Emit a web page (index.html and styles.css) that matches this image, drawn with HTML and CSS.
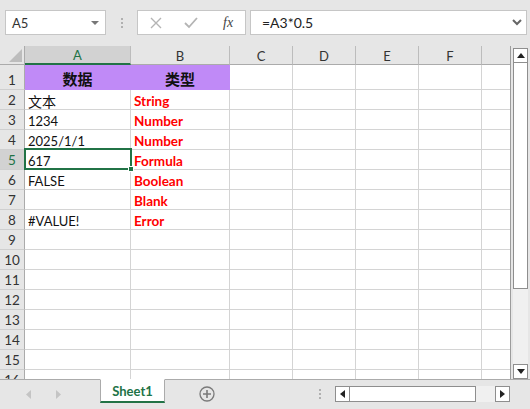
FILE: index.html
```html
<!DOCTYPE html>
<html>
<head>
<meta charset="utf-8">
<link rel="stylesheet" href="styles.css">
</head>
<body>
<div class="toolbar">
  <div class="namebox"><span>A5</span><span class="tri-down"></span></div>
  <div class="sep"><span class="dots"><i></i><i></i><i></i></span></div>
  <div class="btnbox">
    <div class="fbtn"><svg width="12" height="12" viewBox="0 0 12 12"><path d="M1 1 L11 11 M11 1 L1 11" stroke="#b4b4b4" stroke-width="1.4" fill="none"/></svg></div>
    <div class="fbtn"><svg width="14" height="12" viewBox="0 0 14 12"><path d="M1 6 L5 10 L13 1" stroke="#b4b4b4" stroke-width="1.8" fill="none"/></svg></div>
    <div class="fbtn fx">fx</div>
  </div>
  <div class="formula"><span>=A3*0.5</span><svg width="10" height="7" viewBox="0 0 10 7"><path d="M1 1 L5 5 L9 1" stroke="#666" stroke-width="2" fill="none"/></svg></div>
</div>
<div class="main">
  <div class="sheet">
    <div class="corner"><svg width="25" height="19" viewBox="0 0 25 19"><polygon points="22,3 22,16 9,16" fill="#bdbdbd"/></svg></div>
    <div class="ch ch-sel">A</div><div class="ch">B</div><div class="ch">C</div><div class="ch">D</div><div class="ch">E</div><div class="ch">F</div><div class="ch last"></div>

    <div class="rh">1</div><div class="c p ctr">数据</div><div class="c p ctr">类型</div><div class="c"></div><div class="c"></div><div class="c"></div><div class="c"></div><div class="c last"></div>
    <div class="rh">2</div><div class="c"><span class="cjk">文本</span></div><div class="c red">String</div><div class="c"></div><div class="c"></div><div class="c"></div><div class="c"></div><div class="c last"></div>
    <div class="rh">3</div><div class="c">1234</div><div class="c red">Number</div><div class="c"></div><div class="c"></div><div class="c"></div><div class="c"></div><div class="c last"></div>
    <div class="rh">4</div><div class="c">2025/1/1</div><div class="c red">Number</div><div class="c"></div><div class="c"></div><div class="c"></div><div class="c"></div><div class="c last"></div>
    <div class="rh rh-sel">5</div><div class="c sel">617<span class="selbox"><span class="handle"></span></span></div><div class="c red">Formula</div><div class="c"></div><div class="c"></div><div class="c"></div><div class="c"></div><div class="c last"></div>
    <div class="rh">6</div><div class="c">FALSE</div><div class="c red">Boolean</div><div class="c"></div><div class="c"></div><div class="c"></div><div class="c"></div><div class="c last"></div>
    <div class="rh">7</div><div class="c"></div><div class="c red">Blank</div><div class="c"></div><div class="c"></div><div class="c"></div><div class="c"></div><div class="c last"></div>
    <div class="rh">8</div><div class="c">#VALUE!</div><div class="c red">Error</div><div class="c"></div><div class="c"></div><div class="c"></div><div class="c"></div><div class="c last"></div>
    <div class="rh">9</div><div class="c"></div><div class="c"></div><div class="c"></div><div class="c"></div><div class="c"></div><div class="c"></div><div class="c last"></div>
    <div class="rh">10</div><div class="c"></div><div class="c"></div><div class="c"></div><div class="c"></div><div class="c"></div><div class="c"></div><div class="c last"></div>
    <div class="rh">11</div><div class="c"></div><div class="c"></div><div class="c"></div><div class="c"></div><div class="c"></div><div class="c"></div><div class="c last"></div>
    <div class="rh">12</div><div class="c"></div><div class="c"></div><div class="c"></div><div class="c"></div><div class="c"></div><div class="c"></div><div class="c last"></div>
    <div class="rh">13</div><div class="c"></div><div class="c"></div><div class="c"></div><div class="c"></div><div class="c"></div><div class="c"></div><div class="c last"></div>
    <div class="rh">14</div><div class="c"></div><div class="c"></div><div class="c"></div><div class="c"></div><div class="c"></div><div class="c"></div><div class="c last"></div>
    <div class="rh">15</div><div class="c"></div><div class="c"></div><div class="c"></div><div class="c"></div><div class="c"></div><div class="c"></div><div class="c last"></div>
    <div class="rh">16</div><div class="c"></div><div class="c"></div><div class="c"></div><div class="c"></div><div class="c"></div><div class="c"></div><div class="c last"></div>
  </div>
  <div class="vscroll">
    <div class="sbtn"><svg width="8" height="5" viewBox="0 0 8 5"><polygon points="0,5 8,5 4,0" fill="#222"/></svg></div>
    <div class="vthumb"></div>
    <div class="vtrack"></div>
    <div class="sbtn"><svg width="8" height="5" viewBox="0 0 8 5"><polygon points="0,0 8,0 4,5" fill="#222"/></svg></div>
  </div>
</div>
<div class="statusbar">
  <div class="nav">
    <svg width="6" height="9" viewBox="0 0 6 9"><polygon points="5,0 5,9 0,4.5" fill="#c4c4c4"/></svg>
    <svg width="6" height="9" viewBox="0 0 6 9"><polygon points="1,0 1,9 6,4.5" fill="#c4c4c4"/></svg>
  </div>
  <div class="tab">Sheet1</div>
  <div class="addsheet"><svg width="16" height="16" viewBox="0 0 16 16"><circle cx="8" cy="8" r="7" fill="none" stroke="#7a7a7a" stroke-width="1.3"/><path d="M8 4 V12 M4 8 H12" stroke="#7a7a7a" stroke-width="1.6"/></svg></div>
  <div class="hdots"><i></i><i></i><i></i></div>
  <div class="hscroll">
    <div class="hbtn"><svg width="5" height="8" viewBox="0 0 5 8"><polygon points="5,0 5,8 0,4" fill="#222"/></svg></div>
    <div class="hthumb"></div>
    <div class="htrack"></div>
    <div class="hbtn"><svg width="5" height="8" viewBox="0 0 5 8"><polygon points="0,0 0,8 5,4" fill="#222"/></svg></div>
  </div>
</div>
</body>
</html>
```

FILE: styles.css
```css
* { box-sizing: border-box; }
html, body { margin: 0; padding: 0; }
body {
  width: 530px;
  height: 409px;
  overflow: hidden;
  background: #e6e6e6;
  font-family: Lato, "Noto Sans CJK SC", sans-serif;
  color: #222;
}

/* toolbar */
.toolbar {
  height: 46px;
  display: flex;
  align-items: flex-start;
  padding: 10px 0 0 5px;
}
.namebox {
  width: 101px;
  height: 25px;
  background: #fff;
  border: 1px solid #c6c6c6;
  display: flex;
  align-items: center;
  justify-content: space-between;
  padding: 0 6px 0 6px;
  font-size: 13px;
  color: #333;
}
.tri-down {
  width: 0; height: 0;
  border-left: 4px solid transparent;
  border-right: 4px solid transparent;
  border-top: 4px solid #777;
}
.sep {
  width: 31px;
  height: 25px;
  display: flex;
  align-items: center;
  justify-content: center;
}
.dots { display: flex; flex-direction: column; gap: 2px; }
.dots i, .hdots i { display: block; width: 2px; height: 2px; background: #b0b0b0; }
.btnbox {
  width: 109px;
  height: 25px;
  background: #fff;
  border: 1px solid #c6c6c6;
  display: flex;
  align-items: center;
}
.fbtn {
  width: 36px;
  height: 23px;
  display: flex;
  align-items: center;
  justify-content: center;
}
.fx {
  font-family: "Liberation Serif", serif;
  font-style: italic;
  font-size: 14px;
  color: #444;
  padding-left: 2px;
}
.formula {
  margin-left: 4px;
  width: 277px;
  height: 25px;
  background: #fff;
  border: 1px solid #c6c6c6;
  display: flex;
  align-items: center;
  justify-content: space-between;
  padding: 0 4px 0 11px;
  font-size: 14px;
  color: #222;
}

/* main sheet area */
.main {
  display: flex;
  height: 333px;
}
.sheet {
  width: 511px;
  height: 333px;
  overflow: hidden;
  background: #fff;
  display: grid;
  grid-template-columns: 25px 106px 99px 63px 63px 63px 63px 29px;
  grid-template-rows: 19px 25px repeat(15, 20px);
  align-content: start;
  border-right: 1px solid #9c9c9c;
}
.corner {
  background: #e6e6e6;
  border-right: 1px solid #ababab;
  border-bottom: 1px solid #ababab;
}
.corner svg { display: block; }
.ch {
  background: #e6e6e6;
  border-right: 1px solid #bcbcbc;
  border-bottom: 1px solid #ababab;
  display: flex;
  align-items: center;
  justify-content: center;
  padding-top: 1px;
  font-size: 13px;
  color: #333;
}
.ch.last { border-right: none; }
.ch-sel {
  background: #d2d2d2;
  color: #217346;
  border-bottom: 2px solid #217346;
}
.rh {
  background: #e6e6e6;
  border-right: 1px solid #ababab;
  border-bottom: 1px solid #cfcfcf;
  display: flex;
  align-items: flex-end;
  justify-content: center;
  padding-bottom: 1px;
  font-size: 13.5px;
  color: #333;
}
.rh-sel {
  background: #d2d2d2;
  color: #217346;
}
.c {
  border-right: 1px solid #d4d4d4;
  border-bottom: 1px solid #d4d4d4;
  display: flex;
  align-items: center;
  padding: 2px 0 0 3px;
  font-size: 13px;
  color: #111;
  white-space: nowrap;
}
.c.last { border-right: none; }
.cjk { font-size: 14px; }
.p {
  background: #c08af7;
  border-color: #c08af7;
  font-weight: 700;
  font-size: 15px;
  color: #111;
}
.ctr { justify-content: center; padding-left: 0; }
.red {
  color: #ff0000;
  font-weight: 700;
  font-size: 13.5px;
}
.sel { position: relative; }
.selbox {
  position: absolute;
  left: -1px;
  top: -2px;
  right: -2px;
  bottom: -1px;
  border: 2px solid #217346;
}
.handle {
  position: absolute;
  right: -4px;
  bottom: -4px;
  width: 6px;
  height: 6px;
  background: #217346;
  border: 1px solid #fff;
}

/* vertical scrollbar */
.vscroll {
  margin-left: 2px;
  margin-top: 2px;
  width: 15px;
  height: 331px;
  display: flex;
  flex-direction: column;
}
.sbtn {
  height: 15px;
  background: #fff;
  border: 1px solid #8e8e8e;
  display: flex;
  align-items: center;
  justify-content: center;
}
.vthumb {
  height: 226px;
  background: #fff;
  border: 1px solid #8e8e8e;
  border-top: none;
}
.vtrack { flex: 1; background: #f0f0f0; }

/* status bar */
.statusbar {
  height: 30px;
  border-top: 1px solid #ababab;
  display: flex;
  align-items: flex-start;
}
.nav {
  width: 100px;
  height: 28px;
  display: flex;
  align-items: center;
  padding-left: 26px;
  gap: 23px;
}
.nav svg { display: block; }
.tab {
  margin-top: -1px;
  width: 65px;
  height: 24px;
  background: #fff;
  border: 1px solid #ababab;
  border-top-color: #fff;
  border-bottom: 2px solid #217346;
  display: flex;
  align-items: center;
  justify-content: center;
  font-size: 13px;
  font-weight: 700;
  color: #217346;
}
.addsheet {
  margin-left: 34px;
  height: 28px;
  display: flex;
  align-items: center;
}
.addsheet svg { display: block; }
.hdots {
  margin-left: 104px;
  height: 28px;
  display: flex;
  flex-direction: column;
  justify-content: center;
  gap: 2px;
}
.hscroll {
  margin-left: 14px;
  margin-top: 6px;
  width: 175px;
  height: 16px;
  display: flex;
}
.hbtn {
  width: 15px;
  background: #fff;
  border: 1px solid #8e8e8e;
  display: flex;
  align-items: center;
  justify-content: center;
}
.hthumb {
  width: 126px;
  background: #fff;
  border: 1px solid #8e8e8e;
  border-left: none;
}
.htrack { flex: 1; background: #f0f0f0; }
```
